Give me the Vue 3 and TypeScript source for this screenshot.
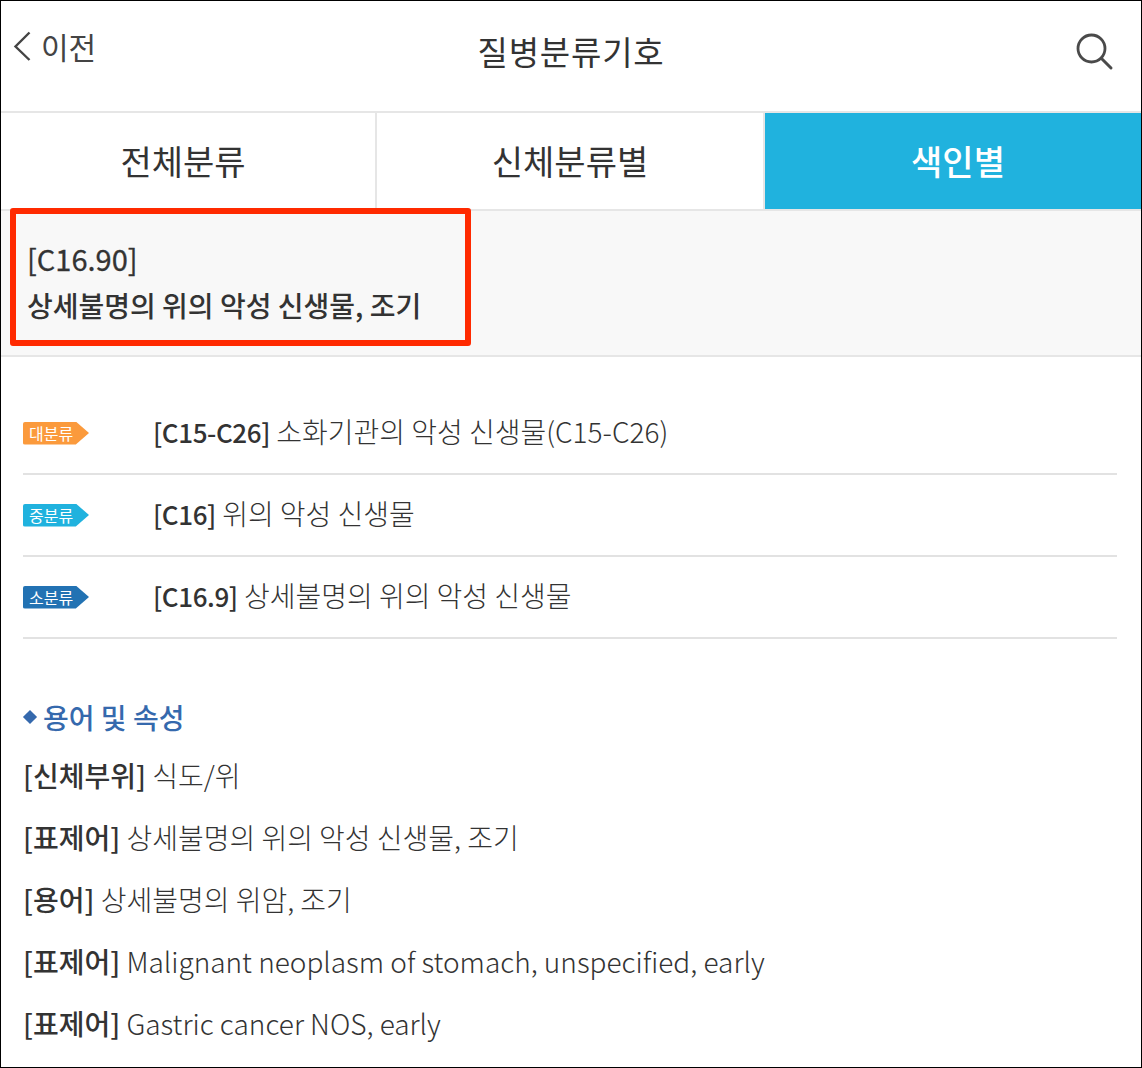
<script setup lang="ts">
const tabs = [
  { label: '전체분류', active: false },
  { label: '신체분류별', active: false },
  { label: '색인별', active: true },
]

const levels = [
  { tag: '대분류', color: '#fb9a3c', code: '[C15-C26]', name: '소화기관의 악성 신생물(C15-C26)' },
  { tag: '중분류', color: '#20b2de', code: '[C16]', name: '위의 악성 신생물' },
  { tag: '소분류', color: '#2272b3', code: '[C16.9]', name: '상세불명의 위의 악성 신생물' },
]

const terms = [
  { key: '[신체부위]', value: '식도/위' },
  { key: '[표제어]', value: '상세불명의 위의 악성 신생물, 조기' },
  { key: '[용어]', value: '상세불명의 위암, 조기' },
  { key: '[표제어]', value: 'Malignant neoplasm of stomach, unspecified, early' },
  { key: '[표제어]', value: 'Gastric cancer NOS, early' },
]
</script>

<template>
  <div class="screen">
    <header class="top-bar">
      <div class="back">
        <svg width="18" height="30" viewBox="0 0 18 30" fill="none">
          <path d="M16.5 1.5 L2.5 15.5 L16.5 29" stroke="#444" stroke-width="2.4" />
        </svg>
        <span>이전</span>
      </div>
      <h1>질병분류기호</h1>
      <svg class="search" width="38" height="38" viewBox="0 0 38 38" fill="none">
        <circle cx="15.5" cy="15.5" r="13.5" stroke="#4a4a4a" stroke-width="2.8" />
        <path d="M25.5 25.5 L35 35" stroke="#4a4a4a" stroke-width="3" stroke-linecap="round" />
      </svg>
    </header>

    <nav class="tabs">
      <div v-for="tab in tabs" :key="tab.label" class="tab" :class="{ active: tab.active }">
        {{ tab.label }}
      </div>
    </nav>

    <section class="summary">
      <p class="code">[C16.90]</p>
      <p class="title">상세불명의 위의 악성 신생물, 조기</p>
      <div class="highlight"></div>
    </section>

    <ul class="levels">
      <li v-for="row in levels" :key="row.tag">
        <span class="tag" :style="{ backgroundColor: row.color }">{{ row.tag }}</span>
        <p><b>{{ row.code }}</b> {{ row.name }}</p>
      </li>
    </ul>

    <section class="terms">
      <h2><i></i>용어 및 속성</h2>
      <p v-for="(term, index) in terms" :key="index"><b>{{ term.key }}</b> {{ term.value }}</p>
    </section>
  </div>
</template>

<style>
html,
body {
  margin: 0;
  background: #fff;
}
</style>

<style scoped>
.screen {
  box-sizing: border-box;
  width: 1142px;
  height: 1068px;
  overflow: hidden;
  border: 1px solid #000;
  font-family: "Noto Sans CJK KR", "Noto Sans", sans-serif;
  color: #333;
  background: #fff;
}

p,
h1,
h2,
ul {
  margin: 0;
  padding: 0;
}

.top-bar {
  display: grid;
  grid-template-columns: 1fr auto 1fr;
  align-items: center;
  height: 110px;
  padding: 0 27px;
}

.back {
  display: flex;
  align-items: center;
  gap: 10px;
  margin: -20px 0 0 -15px;
  font-size: 30px;
  color: #444;
}

.top-bar h1 {
  margin-top: -10px;
  font-size: 33px;
  font-weight: 400;
  letter-spacing: 0.8px;
  color: #333;
}

.search {
  justify-self: end;
  margin-top: -8px;
}

.tabs {
  display: grid;
  grid-template-columns: 376px 388px 1fr;
  height: 100px;
  border-top: 2px solid #e6e6e6;
  border-bottom: 2px solid #e6e6e6;
  box-sizing: border-box;
}

.tab {
  display: flex;
  align-items: center;
  justify-content: center;
  padding-bottom: 2px;
  font-size: 34px;
  color: #333;
  border-right: 2px solid #e6e6e6;
}

.tab:first-child {
  padding-right: 10px;
}

.tab.active {
  padding-left: 10px;
  border-right: 0;
  color: #fff;
  font-weight: 500;
  background: #20b2de;
}

.summary {
  position: relative;
  height: 146px;
  box-sizing: border-box;
  padding: 24px 26px 0;
  background: #f8f8f8;
  border-bottom: 2px solid #e6e6e6;
}

.summary .code {
  font-size: 29px;
  line-height: 46px;
  color: #333;
  -webkit-text-stroke: 0.3px #333;
}

.summary .title {
  margin-top: 1px;
  font-size: 28px;
  line-height: 46px;
  font-weight: 500;
}

.highlight {
  position: absolute;
  left: 9px;
  top: -3px;
  width: 461px;
  height: 138px;
  box-sizing: border-box;
  border: 6px solid #ff2a00;
  border-radius: 3px;
}

.levels {
  margin: 36px 24px 0 22px;
  list-style: none;
}

.levels li {
  display: flex;
  align-items: center;
  height: 82px;
  box-sizing: border-box;
  border-bottom: 2px solid #e2e2e2;
}

.levels p {
  margin-top: -4px;
  font-size: 28px;
  font-weight: 300;
  white-space: pre-wrap;
}

.levels b {
  font-size: 26px;
  font-weight: 500;
  letter-spacing: -0.4px;
}

.terms b {
  font-weight: 500;
}

.tag {
  flex: none;
  width: 66px;
  height: 23px;
  margin-right: 64px;
  padding-left: 6px;
  box-sizing: border-box;
  font-size: 16px;
  line-height: 23px;
  color: #fff;
  clip-path: polygon(0 0, 80% 0, 100% 50%, 80% 100%, 0 100%);
  border-radius: 2px;
}

.terms {
  margin: 51px 24px 0 22px;
}

.terms h2 {
  display: flex;
  align-items: center;
  font-size: 28px;
  font-weight: 500;
  line-height: 54px;
  color: #3569ad;
}

.terms h2 i {
  width: 10px;
  height: 10px;
  margin: 0 8px 0 2px;
  background: #3569ad;
  transform: rotate(45deg);
}

.terms p {
  font-size: 28px;
  font-weight: 300;
  line-height: 62px;
  white-space: nowrap;
}
</style>
